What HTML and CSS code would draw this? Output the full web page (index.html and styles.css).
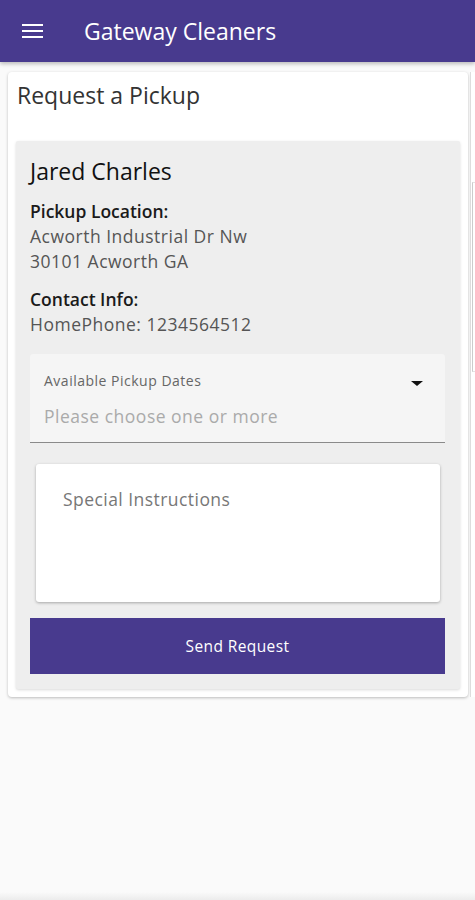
FILE: index.html
```html
<!DOCTYPE html>
<html>
<head>
    <title>Gateway Cleaners</title>
    <meta charset="utf-8">
    <link rel="stylesheet" href="styles.css">
</head>
<body>
    <header class="appbar">
        <span class="menu"><i></i><i></i><i></i></span>
        <span class="apptitle">Gateway Cleaners</span>
    </header>
    <div class="pages">
        <div class="card">
            <h1>Request a Pickup</h1>
            <div class="panel">
                <h2>Jared Charles</h2>
                <div class="info">
                    <strong>Pickup Location:</strong>
                    <span>Acworth Industrial Dr Nw</span>
                    <span>30101 Acworth GA</span>
                </div>
                <div class="info">
                    <strong>Contact Info:</strong>
                    <span>HomePhone: 1234564512</span>
                </div>
                <div class="select">
                    <div class="selecttext">
                        <label>Available Pickup Dates</label>
                        <span class="placeholder">Please choose one or more</span>
                    </div>
                    <span class="arrow"></span>
                </div>
                <div class="notes">Special Instructions</div>
                <button>Send Request</button>
            </div>
        </div>
        <div class="nextcard"><div class="nextinner"></div></div>
    </div>
    <div class="navshadow"></div>
</body>
</html>
```

FILE: styles.css
```css
body{margin:0;background-color:#fafafa;font-family:"Open Sans", "Noto Sans", sans-serif;height:900px;position:relative;overflow:hidden;}
.appbar{height:62px;background-color:#483a8e;display:flex;align-items:center;box-shadow:0 2px 4px rgba(0,0,0,0.25);}
.menu{display:flex;flex-direction:column;gap:4px;margin-left:22px;width:21px;}
.menu i{display:block;height:2px;background:#fff;}
.apptitle{color:#fff;font-size:23px;margin-left:41px;margin-top:-1px;}
.pages{display:flex;padding-top:10px;}
.card{margin-left:8px;width:460px;height:625px;flex-shrink:0;box-sizing:border-box;background:#fff;border-radius:4px;box-shadow:0 1px 3px rgba(0,0,0,0.25);padding:8px 8px 0 8px;}
h1{margin:0;font-size:23px;font-weight:normal;color:#333;padding-left:1px;line-height:30px;}
.panel{margin-top:31px;background:#eeeeee;border-radius:2px;box-shadow:0 1px 3px rgba(0,0,0,0.15);padding:14px 15px 15px 14px;}
h2{margin:0;font-size:23px;font-weight:normal;color:#111;line-height:32px;}
.info{display:flex;flex-direction:column;font-size:17.5px;letter-spacing:0.5px;color:#555;line-height:25px;margin-top:12px;}
.info strong{font-weight:600;color:#1a1a1a;letter-spacing:0;}
.info + .info{margin-top:13px;}
.select{margin-top:17px;height:89px;box-sizing:border-box;background:#f5f5f5;border-bottom:1px solid #8a8a8a;display:flex;align-items:flex-start;padding:17px 22px 0 14px;border-radius:3px 3px 0 0;}
.selecttext{flex:1;display:flex;flex-direction:column;}
.selecttext label{font-size:14px;letter-spacing:0.5px;color:#666;line-height:20px;}
.placeholder{font-size:17.5px;letter-spacing:0.5px;color:#aaa;line-height:26px;margin-top:12px;}
.arrow{width:0;height:0;border-left:6px solid transparent;border-right:6px solid transparent;border-top:5px solid #111;margin-top:10px;}
.notes{margin:21px 5px 0 6px;height:138px;box-sizing:border-box;background:#fff;border-radius:3px;box-shadow:0 1px 3px rgba(0,0,0,0.3);padding:22px 27px;font-size:17.5px;letter-spacing:0.45px;color:#777;line-height:26px;}
button{display:block;width:100%;margin-top:16px;height:56px;border:0;border-radius:0;background:#483a8e;color:#fff;font-family:"Open Sans", "Noto Sans", sans-serif;font-size:15.5px;letter-spacing:0.4px;}
.nextcard{margin-left:2px;width:20px;height:625px;flex-shrink:0;background:#fff;border-left:1px solid #ddd;box-sizing:border-box;padding-top:110px;}
.nextinner{margin-left:1px;height:188px;border-left:1px solid #ccc;border-top:1px solid #e4e4e4;border-bottom:1px solid #e4e4e4;}
.navshadow{position:absolute;left:0;right:0;bottom:0;height:8px;background:linear-gradient(#fafafa,#ececec);}
```
